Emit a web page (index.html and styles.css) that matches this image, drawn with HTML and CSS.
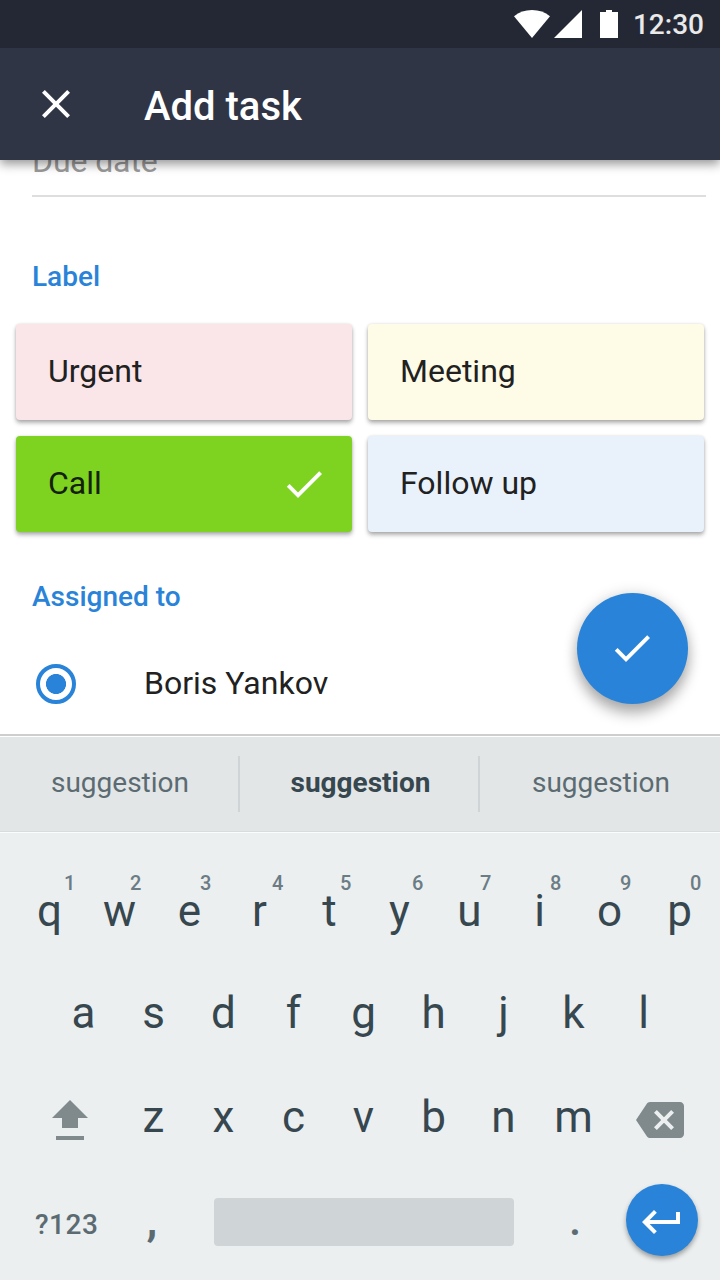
FILE: index.html
```html
<!DOCTYPE html>
<html lang="en">
<head>
<meta charset="utf-8">
<title>Add task</title>
<link rel="stylesheet" href="styles.css">
</head>
<body>
<div class="screen">
  <header class="top">
    <div class="status">
      <svg class="status-icons" width="104" height="28" viewBox="0 0 104 28">
        <path d="M0 6.2C5 2.2 11 0 18 0s13 2.200 18 6.200L18 28z"/>
        <path d="M68 0v28H40z"/>
        <path d="M92 0h6v2h6v26H86V2h6z"/>
      </svg>
      <span class="time">12:30</span>
    </div>
    <div class="appbar">
      <svg class="icon" viewBox="0 0 24 24"><path d="M19 6.41L17.59 5 12 10.59 6.41 5 5 6.41 10.59 12 5 17.59 6.41 19 12 13.41 17.59 19 19 17.59 13.41 12z"/></svg>
      <h1 class="title">Add task</h1>
    </div>
  </header>

  <main class="content">
    <div class="field">Due date</div>
    <h2 class="heading">Label</h2>
    <div class="labels">
      <div class="label urgent"><span>Urgent</span></div>
      <div class="label meeting"><span>Meeting</span></div>
      <div class="label call"><span>Call</span>
        <svg class="icon" viewBox="0 0 24 24"><path d="M9 16.2L4.8 12l-1.400 1.400L9 19 21 7l-1.400-1.400z"/></svg>
      </div>
      <div class="label follow"><span>Follow up</span></div>
    </div>
    <h2 class="heading assigned">Assigned to</h2>
    <div class="person"><span class="radio"></span><span class="name">Boris Yankov</span></div>
    <button class="fab"><svg class="icon" viewBox="0 0 24 24"><path d="M9 16.2L4.8 12l-1.400 1.400L9 19 21 7l-1.400-1.400z"/></svg></button>
  </main>

  <section class="keyboard">
    <div class="suggestions">
      <span>suggestion</span><span class="best">suggestion</span><span>suggestion</span>
    </div>
    <div class="row first">
      <span class="key">q<sup class="one">1</sup></span><span class="key">w<sup>2</sup></span><span class="key">e<sup>3</sup></span><span class="key">r<sup class="wide">4</sup></span><span class="key">t<sup>5</sup></span><span class="key">y<sup class="wide">6</sup></span><span class="key">u<sup>7</sup></span><span class="key">i<sup>8</sup></span><span class="key">o<sup>9</sup></span><span class="key">p<sup>0</sup></span>
    </div>
    <div class="row second">
      <span class="key">a</span><span class="key">s</span><span class="key">d</span><span class="key">f</span><span class="key">g</span><span class="key">h</span><span class="key">j</span><span class="key">k</span><span class="key">l</span>
    </div>
    <div class="row third">
      <svg class="shift" width="36" height="40" viewBox="0 0 36 40"><path d="M18 0l18 18H26v10H10V18H0zM4 36h28v4H4z"/></svg>
      <span class="key">z</span><span class="key">x</span><span class="key">c</span><span class="key">v</span><span class="key">b</span><span class="key">n</span><span class="key">m</span>
      <svg class="icon backspace" viewBox="0 0 24 24"><path d="M22 3H7c-.69 0-1.230.35-1.590.88L0 12l5.410 8.110c.36.53.9.89 1.590.89h15c1.100 0 2-.9 2-2V5c0-1.100-.9-2-2-2zm-3 12.590L17.590 17 14 13.410 10.410 17 9 15.590 12.590 12 9 8.410 10.410 7 14 10.590 17.590 7 19 8.410 15.410 12 19 15.590z"/></svg>
    </div>
    <div class="row last">
      <span class="mode">?123</span>
      <span class="key punct comma">,</span>
      <span class="space"></span>
      <span class="key punct dot">.</span>
      <span class="enter"><svg class="icon" viewBox="0 0 24 24"><path d="M19 7v4H5.830l3.580-3.590L8 6l-6 6 6 6 1.410-1.410L5.830 13H21V7z"/></svg></span>
    </div>
  </section>
</div>
</body>
</html>
```

FILE: styles.css
```css
* { box-sizing: border-box; }
body { margin: 0; font-family: Roboto, "Liberation Sans", sans-serif; }
h1, h2 { margin: 0; font-weight: 500; }

.screen {
  display: flex;
  flex-direction: column;
  width: 720px;
  height: 1280px;
  overflow: hidden;
  background: #fff;
}
.icon { width: 48px; height: 48px; flex: none; fill: #fff; }

.top {
  position: relative;
  z-index: 1;
  background: #303546;
  color: #fff;
  box-shadow: 0 4px 10px rgba(0, 0, 0, .42);
}
.status {
  display: flex;
  justify-content: flex-end;
  align-items: center;
  height: 48px;
  padding-right: 16px;
  gap: 15px;
  background: #242834;
}
.status-icons { fill: #fff; }
.time { font-size: 28px; font-weight: 500; line-height: 46px; padding-top: 2px; color: #e9e9ea; }
.appbar { display: flex; align-items: center; height: 112px; padding-left: 32px; gap: 64px; }
.title { font-size: 40px; line-height: 52px; padding-top: 6px; }

.content { position: relative; height: 574px; }
.field {
  height: 37px;
  margin: 0 14px 0 32px;
  border-bottom: 2px solid #dedede;
  font-size: 32px;
  line-height: 2px;
  letter-spacing: -.1px;
  color: #9a9a9a;
}
.heading { margin: 62px 0 0 32px; font-size: 28px; line-height: 36px; color: #2983d8; }
.labels {
  display: grid;
  grid-template-columns: 336px 336px;
  grid-auto-rows: 96px;
  gap: 16px;
  margin: 29px 0 0 16px;
}
.label {
  display: flex;
  align-items: center;
  justify-content: space-between;
  padding: 0 24px 0 32px;
  border-radius: 4px;
  font-size: 32px;
  color: #212121;
  box-shadow: 0 0 3px rgba(0, 0, 0, .12), 0 3px 4px rgba(0, 0, 0, .3);
}
.label span { line-height: 40px; margin-top: -2px; }
.urgent { background: #fae6e8; }
.meeting { background: #fefbe7; }
.call { background: #7ed321; color: #14210a; }
.follow { background: #e9f1fb; }
.assigned { margin-top: 47px; }
.person { display: flex; align-items: center; height: 48px; margin: 45px 0 0 36px; gap: 68px; }
.radio {
  width: 40px;
  height: 40px;
  border: 4px solid #2983d8;
  border-radius: 50%;
  background: radial-gradient(circle, #2983d8 9.7px, #fff 10.3px);
}
.name { font-size: 32px; line-height: 40px; margin-top: -2px; color: #212121; }
.fab {
  position: absolute;
  right: 32.5px;
  bottom: 30.5px;
  display: flex;
  align-items: center;
  justify-content: center;
  width: 111px;
  height: 111px;
  padding: 0;
  border: 0;
  border-radius: 50%;
  background: #2983d8;
  box-shadow: 0 0 14px rgba(0, 0, 0, .15), 0 10px 14px rgba(0, 0, 0, .28);
}

.keyboard { height: 546px; background: #ebeff0; color: #37474f; }
.suggestions {
  display: grid;
  grid-template-columns: 240px 240px 240px;
  height: 99px;
  padding: 19px 0;
  border-top: 2px solid #cdcfcf;
  border-bottom: 1px solid #fbfcfc;
  background: #e2e6e7;
  box-shadow: inset 0 1px #fff, inset 0 -1px #d9dcdd;
}
.suggestions span {
  height: 56px;
  margin-top: 1px;
  padding-left: 2px;
  border-right: 2px solid #cfd4d6;
  text-align: center;
  font-size: 28px;
  line-height: 53px;
  color: #5c6b72;
}
.suggestions span:last-child { padding-left: 4px; border-right-color: transparent; }
.suggestions .best { padding-left: 3px; font-weight: 700; color: #37474f; }

.row { display: flex; justify-content: center; height: 102px; padding-left: 7px; }
.first { margin-top: 27px; padding-left: 9px; }
.key { position: relative; width: 70px; text-align: center; font-size: 44px; line-height: 102px; }
.key sup {
  position: absolute;
  top: 13px;
  left: 45.500px;
  font-size: 20px;
  font-weight: 500;
  line-height: 20px;
  color: #6b7c85;
}
.key .one { left: 49.500px; }
.key .wide { left: 47.500px; }
.third { justify-content: flex-start; align-items: center; height: 106px; padding-left: 52px; }
.shift { margin: 6px 30.500px 0 0; fill: #80898c; }
.backspace { margin: 6px 0 0 27.500px; fill: #80898c; }
.last { justify-content: flex-start; align-items: center; height: 100px; padding-left: 35px; }
.mode { width: 82px; font-size: 28px; font-weight: 500; line-height: 36px; padding-top: 10px; letter-spacing: .5px; color: #5c6b72; }
.punct { font-weight: 500; color: #5c6b72; }
.comma { margin-right: 27px; font-weight: 700; }
.space { width: 300px; height: 48px; margin-top: 4px; border-radius: 4px; background: #cfd4d7; }
.dot { margin: 0 16px 0 26px; }
.enter {
  display: flex;
  width: 72px;
  height: 72px;
  padding: 14px 12px 10px;
  border-radius: 50%;
  background: #2983d8;
  box-shadow: 0 3px 5px rgba(0, 0, 0, .35);
}
```
